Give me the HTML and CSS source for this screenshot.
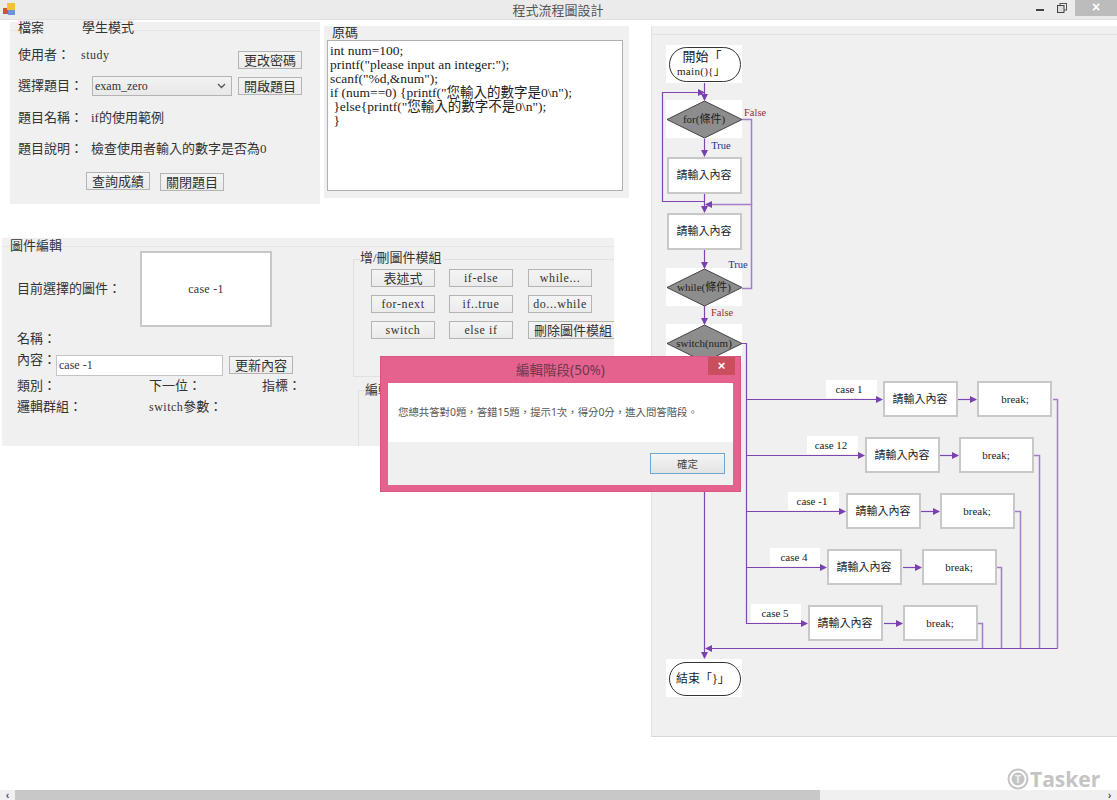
FILE: index.html
```html
<!DOCTYPE html>
<html lang="zh-Hant">
<head>
    <meta charset="UTF-8">
    <title>程式流程圖設計</title>
    <link rel="stylesheet" href="styles.css">
</head>
<body>
    <div class="titlebar">
        <svg class="app-icon" width="13" height="13" viewBox="0 0 13 13">
            <rect x="0" y="5" width="6" height="6" fill="#d8503c"/>
            <rect x="4" y="0" width="8" height="7" fill="#f2c230"/>
            <rect x="5" y="7" width="7" height="5" fill="#6c94d8"/>
        </svg>
        <div class="title-text">程式流程圖設計</div>
        <div class="win-controls">
            <span class="win-min"></span>
            <svg class="win-restore" width="10" height="10" viewBox="0 0 10 10">
                <rect x="3" y="0.5" width="6.5" height="6.5" fill="none" stroke="#555"/>
                <rect x="0.5" y="2.5" width="6.5" height="7" fill="#ddd" stroke="#444"/>
            </svg>
            <span class="win-close">×</span>
        </div>
    </div>

    <div class="workspace">
        <div class="left-col">
            <div class="top-row">
                <div class="panel file-panel">
                    <div class="groupbox">
                        <div class="legend-row">
                            <span class="legend legend-file">檔案</span>
                            <span class="legend">學生模式</span>
                        </div>
                    </div>
                    <div class="file-form">
                        <div class="row">
                            <span class="label label-user">使用者：</span>
                            <span class="latin">study</span>
                            <button class="btn btn-end btn-low">更改密碼</button>
                        </div>
                        <div class="row">
                            <span class="label label-exam label-low">選擇題目：</span>
                            <div class="select-wrap">
                                <select class="exam-select"><option>exam_zero</option></select>
                                <svg class="select-arrow" width="9" height="6" viewBox="0 0 9 6">
                                    <path d="M1 1 L4.500 4.500 L8 1" fill="none" stroke="#555" stroke-width="1.300"/>
                                </svg>
                            </div>
                            <button class="btn btn-end btn-nudge">開啟題目</button>
                        </div>
                        <div class="row">
                            <span class="label label-name">題目名稱：</span>
                            <span class="value">if的使用範例</span>
                        </div>
                        <div class="row">
                            <span class="label label-name">題目說明：</span>
                            <span class="value">檢查使用者輸入的數字是否為0</span>
                        </div>
                        <div class="row row-actions">
                            <button class="btn">查詢成績</button>
                            <button class="btn btn-nudge">關閉題目</button>
                        </div>
                    </div>
                </div>

                <div class="panel source-panel">
                    <div class="legend source-legend">原碼</div>
                    <pre class="source-box">int num=100;
printf("please input an integer:");
scanf("%d,&amp;num");
if (num==0) {printf("您輸入的數字是0\n");
 }else{printf("您輸入的數字不是0\n");
 }</pre>
                </div>
            </div>

            <div class="panel editor-panel">
                <div class="groupbox">
                    <div class="legend-row"><span class="legend">圖件編輯</span></div>
                </div>
                <div class="editor-body">
                    <div class="editor-form">
                        <div class="row row-center">
                            <span class="label label-preview">目前選擇的圖件：</span>
                            <div class="preview-box">case -1</div>
                        </div>
                        <div class="row"><span class="label">名稱：</span></div>
                        <div class="row">
                            <span class="label label-content">內容：</span>
                            <input class="content-input" value="case -1">
                            <button class="btn btn-update">更新內容</button>
                        </div>
                        <div class="row">
                            <span class="label label-kind">類別：</span>
                            <span class="label label-next">下一位：</span>
                            <span class="label">指標：</span>
                        </div>
                        <div class="row">
                            <span class="label label-kind">邏輯群組：</span>
                            <span class="label label-switch"><span class="latin">switch</span>參數：</span>
                        </div>
                    </div>
                    <div class="editor-side">
                        <div class="module-box">
                            <div class="legend module-legend">增/刪圖件模組</div>
                            <div class="module-grid">
                                <button class="btn btn-mod">表述式</button>
                                <button class="btn btn-mod btn-latin">if-else</button>
                                <button class="btn btn-mod btn-latin">while...</button>
                                <button class="btn btn-mod btn-latin">for-next</button>
                                <button class="btn btn-mod btn-latin">if..true</button>
                                <button class="btn btn-mod btn-latin">do...while</button>
                                <button class="btn btn-mod btn-latin">switch</button>
                                <button class="btn btn-mod btn-latin">else if</button>
                                <button class="btn btn-delete">刪除圖件模組</button>
                            </div>
                        </div>
                        <div class="edit-box">
                            <div class="legend edit-legend">編輯</div>
                        </div>
                    </div>
                </div>
            </div>
        </div>

        <div class="chart-panel">
            <svg class="chart" width="466" height="711" viewBox="651 26 466 711">
                <defs>
                    <marker id="arrow" markerWidth="7" markerHeight="7" refX="6" refY="3.5" orient="auto" markerUnits="userSpaceOnUse">
                        <path d="M0 0 L7 3.5 L0 7 Z" fill="#7a3fb0"/>
                    </marker>
                </defs>
                <line class="chart-top" x1="651" y1="34.5" x2="1117" y2="34.5"/>

                <!-- white backings -->
                <rect class="backing" x="666" y="45" width="76" height="38"/>
                <rect class="backing" x="666" y="100" width="76" height="38"/>
                <rect class="backing" x="666" y="268" width="76" height="38"/>
                <rect class="backing" x="666" y="324" width="76" height="38"/>
                <rect class="backing" x="666" y="659" width="76" height="38"/>
                <rect class="backing" x="826" y="380" width="51" height="18"/>
                <rect class="backing" x="807" y="436" width="51" height="18"/>
                <rect class="backing" x="788" y="492" width="51" height="18"/>
                <rect class="backing" x="770" y="548" width="50" height="18"/>
                <rect class="backing" x="751" y="604" width="50" height="18"/>

                <!-- flow lines -->
                <path class="flow" d="M704.5 83 V100" marker-end="url(#arrow)"/>
                <path class="flow" d="M704.5 201.500 H662.500 V92.500 H704" marker-end="url(#arrow)"/>
                <path class="flow-light" d="M742 119.500 H751.500 V204.500 H706" marker-end="url(#arrow)"/>
                <path class="flow" d="M704.500 139 V156" marker-end="url(#arrow)"/>
                <path class="flow" d="M704.500 194 V212" marker-end="url(#arrow)"/>
                <path class="flow" d="M704.500 250 V268" marker-end="url(#arrow)"/>
                <path class="flow-light" d="M742 288.500 H751.500 V204"/>
                <path class="flow" d="M704.500 306 V324" marker-end="url(#arrow)"/>
                <path class="flow" d="M742 343.500 H746.500 V623.500"/>
                <path class="flow" d="M704.500 362 V658" marker-end="url(#arrow)"/>

                <path class="flow" d="M746 399.500 H882" marker-end="url(#arrow)"/>
                <path class="flow" d="M958 399.500 H976" marker-end="url(#arrow)"/>
                <path class="flow-light" d="M1053 399.500 H1057.500 V648.500"/>

                <path class="flow" d="M746 455.500 H864" marker-end="url(#arrow)"/>
                <path class="flow" d="M940 455.500 H958" marker-end="url(#arrow)"/>
                <path class="flow-light" d="M1034 455.500 H1039.500 V648.500"/>

                <path class="flow" d="M746 511.500 H845" marker-end="url(#arrow)"/>
                <path class="flow" d="M921 511.500 H939" marker-end="url(#arrow)"/>
                <path class="flow-light" d="M1015 511.500 H1020.500 V648.500"/>

                <path class="flow" d="M746 567.500 H826" marker-end="url(#arrow)"/>
                <path class="flow" d="M903 567.500 H921" marker-end="url(#arrow)"/>
                <path class="flow-light" d="M997 567.500 H1001.500 V648.500"/>

                <path class="flow" d="M746 623.500 H807" marker-end="url(#arrow)"/>
                <path class="flow" d="M884 623.500 H902" marker-end="url(#arrow)"/>
                <path class="flow-light" d="M978 623.500 H982.500 V648.500"/>

                <path class="flow" d="M1057.500 648.500 H706" marker-end="url(#arrow)"/>

                <!-- start / end -->
                <rect class="terminal" x="669.500" y="47.500" width="71" height="34" rx="17"/>
                <text class="node-text" x="702" y="61">開始「</text>
                <text class="node-latin" x="701" y="75">main(){」</text>
                <rect class="terminal" x="669.500" y="662.500" width="71" height="33" rx="16.500"/>
                <text class="node-end" x="703" y="683">結束「}」</text>

                <!-- decisions -->
                <polygon class="decision" points="667,119.500 704.500,101 742,119.500 704.500,138"/>
                <text class="node-small" x="704" y="123">for(條件)</text>
                <polygon class="decision" points="667,287.500 704.500,269 742,287.500 704.500,306"/>
                <text class="node-small" x="704" y="291">while(條件)</text>
                <polygon class="decision" points="667,343.500 704.500,325 742,343.500 704.500,362"/>
                <text class="node-small" x="704" y="347">switch(num)</text>

                <text class="flag-false" x="744" y="116">False</text>
                <text class="flag-true" x="721" y="149">True</text>
                <text class="flag-true" x="738" y="268">True</text>
                <text class="flag-false" x="711" y="316">False</text>

                <!-- statements -->
                <rect class="box" x="668" y="158" width="73" height="35"/>
                <text class="node-small" x="704" y="179">請輸入內容</text>
                <rect class="box" x="668" y="214" width="73" height="35"/>
                <text class="node-small" x="704" y="235">請輸入內容</text>

                <text class="case-text" x="849" y="393">case 1</text>
                <rect class="box" x="884" y="382" width="73" height="34"/>
                <text class="node-small" x="920" y="403">請輸入內容</text>
                <rect class="box" x="978" y="382" width="73" height="34"/>
                <text class="case-text" x="1015" y="403">break;</text>

                <text class="case-text" x="831" y="449">case 12</text>
                <rect class="box" x="866" y="438" width="73" height="34"/>
                <text class="node-small" x="902" y="459">請輸入內容</text>
                <rect class="box" x="960" y="438" width="73" height="34"/>
                <text class="case-text" x="996" y="459">break;</text>

                <text class="case-text" x="812" y="505">case -1</text>
                <rect class="box" x="847" y="494" width="73" height="34"/>
                <text class="node-small" x="883" y="515">請輸入內容</text>
                <rect class="box" x="941" y="494" width="73" height="34"/>
                <text class="case-text" x="977" y="515">break;</text>

                <text class="case-text" x="794" y="561">case 4</text>
                <rect class="box" x="828" y="550" width="73" height="34"/>
                <text class="node-small" x="864" y="571">請輸入內容</text>
                <rect class="box" x="923" y="550" width="73" height="34"/>
                <text class="case-text" x="959" y="571">break;</text>

                <text class="case-text" x="775" y="617">case 5</text>
                <rect class="box" x="809" y="606" width="73" height="34"/>
                <text class="node-small" x="845" y="627">請輸入內容</text>
                <rect class="box" x="904" y="606" width="73" height="34"/>
                <text class="case-text" x="940" y="627">break;</text>
            </svg>
        </div>
    </div>

    <div class="scrollbar">
        <span class="scroll-arrow">‹</span>
        <div class="scroll-thumb"></div>
        <span class="scroll-arrow scroll-right">›</span>
    </div>

    <!-- finished-state dialog -->
    <div class="dialog">
        <div class="dialog-title">編輯階段(50%)</div>
        <span class="dialog-close">×</span>
        <div class="dialog-msg">您總共答對0題，答錯15題，提示1次，得分0分，進入問答階段。</div>
        <div class="dialog-foot"><button class="dialog-btn">確定</button></div>
    </div>

    <div class="watermark">
        <svg width="22" height="22" viewBox="0 0 22 22">
            <circle cx="11" cy="11" r="9.500" fill="none" stroke="#c4c4c4" stroke-width="2"/>
            <circle cx="11" cy="11" r="6.500" fill="#c4c4c4"/>
            <text class="watermark-t" x="11" y="15">T</text>
        </svg>
        <span>Tasker</span>
    </div>
</body>
</html>
```

FILE: styles.css
```css
* {
    box-sizing: border-box;
}

body {
    margin: 0;
    width: 1117px;
    height: 800px;
    position: relative;
    overflow: hidden;
    background-color: #fff;
    color: #333;
    font-family: "Liberation Serif", "Noto Sans CJK TC", serif;
    font-size: 13px;
}

/* title bar */
.titlebar {
    height: 20px;
    display: flex;
    align-items: center;
    padding-left: 3px;
    background-color: #ebebeb;
    border-bottom: 1px solid #e0e0e0;
}

.app-icon {
    flex: none;
}

.title-text {
    flex: 1;
    min-width: 0;
    padding-left: 64px;
    text-align: center;
    font-size: 13px;
    color: #555;
}

.win-controls {
    flex: none;
    display: flex;
    align-self: flex-start;
    align-items: center;
    height: 16px;
}

.win-min {
    flex: none;
    width: 8px;
    height: 2px;
    margin-top: 4px;
    background-color: #444;
}

.win-restore {
    flex: none;
    margin-left: 13px;
}

.win-close {
    flex: none;
    width: 42px;
    height: 16px;
    margin-left: 8px;
    background-color: #bcbcbc;
    color: #fff;
    font: bold 14px/15px "Liberation Sans", sans-serif;
    text-align: center;
}

/* page layout */
.workspace {
    height: 770px;
    display: flex;
}

.left-col {
    width: 651px;
    flex: none;
}

.top-row {
    display: flex;
    padding-top: 2px;
    height: 186px;
}

.panel {
    background-color: #f0f0f0;
}

.groupbox {
    height: 0;
    margin-top: 8px;
    border-top: 1px solid #e4e4e4;
}

.legend-row {
    display: flex;
    margin-top: -9px;
}

.legend {
    font-size: 13px;
    line-height: 16px;
    color: #333;
    background-color: #f0f0f0;
}

.latin {
    font-size: 12px;
    line-height: 18px;
    letter-spacing: 0.500px;
}

.label {
    line-height: 18px;
    font-size: 13px;
    white-space: nowrap;
}

.value {
    line-height: 18px;
    font-size: 13px;
}

.row {
    display: flex;
    align-items: flex-start;
}

.row-center {
    align-items: center;
    align-self: start;
    height: 76px;
}

.btn {
    width: 64px;
    height: 18px;
    padding: 0;
    border: 1px solid #b4b4b4;
    background: linear-gradient(#f4f4f4, #ebebeb);
    color: #333;
    font-family: inherit;
    font-size: 13px;
    line-height: 15px;
}

.btn-end {
    margin-left: auto;
}

.btn-low {
    margin-top: 5px;
}

.btn-nudge {
    margin-top: 1px;
}

/* file panel */
.file-panel {
    width: 310px;
    height: 182px;
    margin-left: 10px;
}

.file-panel .legend-row {
    margin-top: -11px;
    padding-left: 8px;
}

.legend-file {
    width: 64px;
}

.file-form {
    display: grid;
    grid-template-rows: 30px 33px 31px 32px 19px;
    width: 292px;
    margin: 15px 0 0 8px;
    padding-right: 8px;
}

.label-user {
    width: 63px;
}

.label-exam {
    width: 74px;
}

.label-low {
    margin-top: 1px;
}

.label-name {
    width: 73px;
}

.select-wrap {
    position: relative;
    width: 140px;
    height: 20px;
}

.exam-select {
    width: 140px;
    height: 20px;
    padding: 0 0 0 2px;
    appearance: none;
    border: 1px solid #b4b4b4;
    border-radius: 0;
    background: linear-gradient(#f2f2f2, #e8e8e8);
    color: #333;
    font-family: inherit;
    font-size: 12px;
}

.select-arrow {
    position: absolute;
    right: 6px;
    top: 7px;
}

.row-actions {
    gap: 10px;
    padding-left: 68px;
}

/* source panel */
.source-panel {
    width: 305px;
    height: 172px;
    margin: 4px 0 0 4px;
    padding: 0 6px 0 3px;
}

.source-legend {
    width: 32px;
    margin-left: 5px;
    height: 14px;
    line-height: 13px;
}

.source-box {
    height: 151px;
    margin: 0;
    padding: 3px 2px;
    border: 1px solid #b0b0b0;
    background-color: #fff;
    color: #222;
    font-family: "Liberation Serif", "Noto Sans CJK TC", serif;
    font-size: 13.500px;
    line-height: 14px;
}

/* editor panel */
.editor-panel {
    width: 612px;
    height: 208px;
    margin: 32px 0 0 2px;
    overflow: hidden;
}

.editor-panel .legend-row {
    padding-left: 8px;
}

.editor-body {
    display: flex;
    margin-top: 4px;
}

.editor-form {
    width: 351px;
    flex: none;
    padding-left: 15px;
    display: grid;
    grid-template-rows: 79px 21px 26px 21px 18px;
}

.label-preview {
    width: 123px;
}

.preview-box {
    width: 132px;
    height: 76px;
    border: 2px solid #c8c8c8;
    background-color: #fff;
    font-size: 12px;
    letter-spacing: 0.300px;
    line-height: 72px;
    text-align: center;
}

.label-content {
    width: 39px;
}

.content-input {
    width: 167px;
    height: 21px;
    margin-top: 4px;
    padding: 0 2px;
    border: 1px solid #c4c4c4;
    background-color: #fff;
    color: #333;
    font-family: inherit;
    font-size: 12px;
}

.btn-update {
    margin: 5px 0 0 6px;
}

.label-kind {
    width: 132px;
}

.label-next {
    width: 113px;
}

/* add / remove module */
.editor-side {
    flex: 1;
    min-width: 0;
}

.module-box {
    height: 118px;
    margin-top: 8px;
    border: 1px solid #e0e0e0;
    border-right: none;
}

.module-legend {
    width: 84px;
    height: 16px;
    margin: -9px 0 0 6px;
    line-height: 14px;
}

.module-grid {
    display: grid;
    grid-template-columns: 78px 79px 86px;
    grid-template-rows: 26px 26px 18px;
    padding: 2px 0 0 17px;
}

.btn-latin {
    font-size: 12px;
    letter-spacing: 0.600px;
}

.btn-delete {
    width: 92px;
    height: 18px;
    padding: 0 0 0 5px;
    border: 1px solid #b4b4b4;
    background: linear-gradient(#f4f4f4, #ebebeb);
    color: #333;
    font-family: inherit;
    font-size: 13px;
    text-align: left;
    white-space: nowrap;
}

.edit-box {
    height: 70px;
    margin: 13px 0 0 5px;
    border-left: 1px solid #e0e0e0;
    border-top: 1px solid #e0e0e0;
}

.edit-legend {
    width: 30px;
    height: 14px;
    margin: -8px 0 0 6px;
    line-height: 14px;
}

/* flowchart */
.chart-panel {
    width: 466px;
    height: 711px;
    margin-top: 6px;
    background-color: #f0f0f0;
    border-left: 1px solid #e2e2e2;
    border-bottom: 1px solid #d8d8d8;
}

.chart {
    display: block;
    margin-left: -1px;
}

.chart-top {
    stroke: #e2e2e2;
}

.backing {
    fill: #fff;
}

.flow,
.flow-light {
    fill: none;
    stroke: #7f45b2;
    stroke-width: 1.200;
}

.flow-light {
    stroke: #a47ec6;
    stroke-width: 1.500;
}

.terminal {
    fill: #fff;
    stroke: #333;
}

.decision {
    fill: #8d8d8d;
    stroke: #444;
}

.box {
    fill: #fff;
    stroke: #c8c8c8;
    stroke-width: 2;
}

.node-text,
.node-latin,
.node-end,
.node-small,
.case-text,
.flag-true,
.flag-false {
    font-family: "Liberation Serif", "Noto Sans CJK TC", serif;
    text-anchor: middle;
    fill: #222;
}

.node-text {
    font-size: 13px;
}

.node-latin {
    font-size: 11px;
    letter-spacing: 0.300px;
}

.node-end {
    font-size: 12px;
}

.node-small {
    font-size: 11px;
}

.case-text {
    font-size: 11px;
}

.flag-false {
    font-size: 10.500px;
    fill: #9c2b2b;
    text-anchor: start;
}

.flag-true {
    font-size: 10.500px;
    fill: #1f2f8c;
}

/* scrollbar */
.scrollbar {
    height: 10px;
    display: flex;
    align-items: center;
    background-color: #f0f0f0;
}

.scroll-arrow {
    width: 15px;
    flex: none;
    color: #555;
    font: bold 11px/10px "Liberation Sans", sans-serif;
    text-align: center;
}

.scroll-thumb {
    width: 805px;
    height: 10px;
    background-color: #c8c8c8;
}

.scroll-right {
    margin-left: auto;
}

/* dialog lies over the form and chart */
.dialog {
    position: absolute;
    left: 380px;
    top: 356px;
    width: 361px;
    height: 136px;
    padding: 0 7px 7px;
    background-color: #e5628f;
    border: 1px solid #d9557f;
}

.dialog-title {
    height: 26px;
    line-height: 26px;
    text-align: center;
    font-family: "Noto Sans", "Noto Sans CJK TC", sans-serif;
    font-size: 13.500px;
    color: #6a3a4e;
}

.dialog-close {
    position: absolute;
    right: 5px;
    top: 0;
    width: 27px;
    height: 18px;
    background-color: #c94f5e;
    color: #fff;
    font: bold 13px/18px "Liberation Sans", sans-serif;
    text-align: center;
}

.dialog-msg {
    height: 59px;
    padding: 20px 0 0 10px;
    background-color: #fff;
    color: #555;
    font-family: "Noto Sans", "Noto Sans CJK TC", sans-serif;
    font-size: 10.400px;
    line-height: 18px;
    white-space: nowrap;
}

.dialog-foot {
    height: 43px;
    display: flex;
    justify-content: flex-end;
    padding: 11px 8px 0 0;
    background-color: #f0f0f0;
}

.dialog-btn {
    width: 75px;
    height: 21px;
    padding: 0;
    border: 1px solid #6aa8d2;
    background: linear-gradient(#f4f4f4, #e4e4e4);
    color: #444;
    font-family: "Noto Sans CJK TC", sans-serif;
    font-size: 10.500px;
}

/* watermark */
.watermark {
    position: absolute;
    left: 1007px;
    top: 768px;
    display: flex;
    align-items: center;
    gap: 1px;
    color: #c4c4c4;
    font: bold 21px/22px "Open Sans", sans-serif;
}

.watermark-t {
    fill: #f0f0f0;
    font: bold 11px "Open Sans", sans-serif;
    text-anchor: middle;
}
```
